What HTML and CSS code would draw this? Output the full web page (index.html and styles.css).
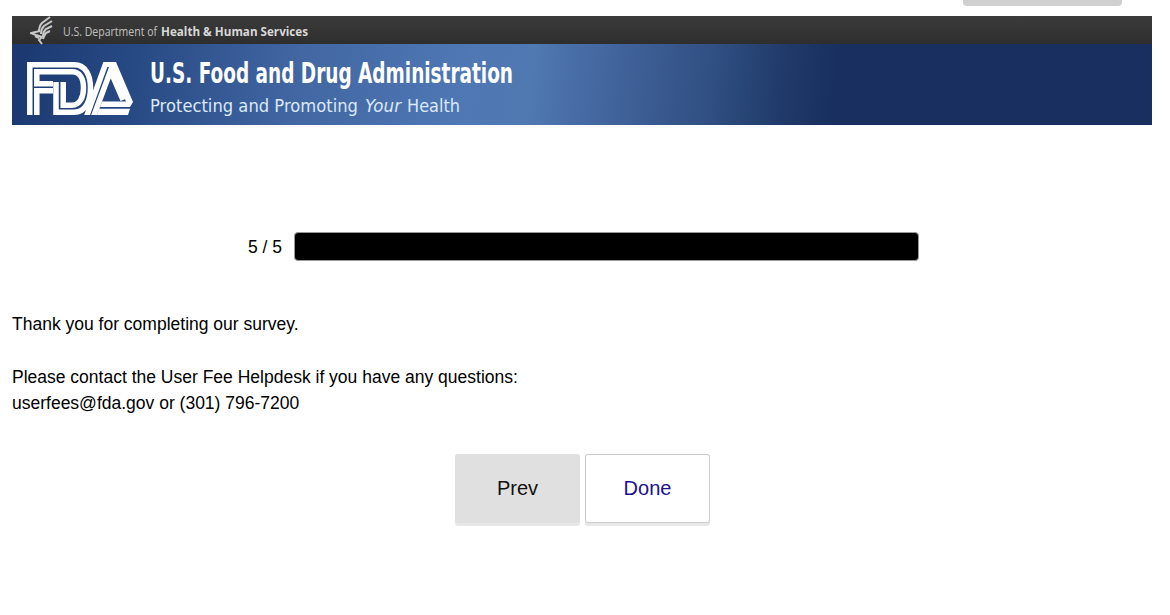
FILE: index.html
```html
<!DOCTYPE html>
<html lang="en">
<head>
    <meta charset="UTF-8">
    <meta name="viewport" content="width=device-width, initial-scale=1.0">
    <title>FDA User Fee Survey</title>
    <link rel="stylesheet" href="styles.css">
</head>
<body>

<div class="exit-tab"></div>

<div class="container">
    <div class="banner">
        <div class="hhs">
            <svg class="hhs-logo" width="23" height="29" viewBox="0 0 23 29">
                <path d="M20 1L12 7Q9 10 9 16M22 5L14 10Q11 13 11 18M22 10L16 13Q13 16 13 20M20 15L16 17Q14 20 13 23" />
                <path d="M10 15L1 17L6 19L12 21L9 24L12 28M5 20L9 22" />
            </svg>
            <svg class="hhs-name" width="260" height="28">
                <text x="0" y="20" textLength="94" lengthAdjust="spacingAndGlyphs">U.S. Department of</text>
                <text class="bold" x="98" y="20" textLength="147" lengthAdjust="spacingAndGlyphs">Health &amp; Human Services</text>
            </svg>
        </div>
        <div class="fda">
            <svg class="fda-logo" width="107" height="53" viewBox="0 0 107 53">
                <!-- F and D share the outer and the inner band -->
                <path d="M2.8 53V2.8H47C59 2.8 63.5 14 63.5 26S59 50.2 47 50.2H29V20" />
                <path d="M26 21.8H9.8V9.8H45C53 9.8 56.5 17 56.5 26S53 43.2 45 43.2H36.2V20" />
                <path d="M9.8 53V28.8H26" />
                <!-- A -->
                <path d="M80 -2L59 56" />
                <path d="M66 56L83.5 9L96 38" />
                <path class="solid" d="M77 0H89L106 40L103 45H73L75 39.5H99L84 5H77Z" />
                <path class="solid" d="M72 46.8H103L101 53H70Z" />
            </svg>
            <svg class="fda-name" width="560" height="80">
                <text class="title" x="0" y="39" textLength="363" lengthAdjust="spacingAndGlyphs">U.S. Food and Drug Administration</text>
                <text class="tagline" x="0" y="68" textLength="208" lengthAdjust="spacingAndGlyphs">Protecting and Promoting</text>
                <text class="tagline italic" x="215" y="68" textLength="36" lengthAdjust="spacingAndGlyphs">Your</text>
                <text class="tagline" x="257" y="68" textLength="53" lengthAdjust="spacingAndGlyphs">Health</text>
            </svg>
        </div>
    </div>

    <!-- Survey progress -->
    <div class="progress">
        <span>5 / 5</span>
        <div class="bar"></div>
    </div>

    <div class="message">
        <p>Thank you for completing our survey.</p>
        <p>Please contact the User Fee Helpdesk if you have any questions:<br>
        userfees@fda.gov or (301) 796-7200</p>
    </div>

    <div class="buttons">
        <div class="button-base"><button class="prev">Prev</button></div>
        <div class="button-base"><button class="done">Done</button></div>
    </div>
</div>

</body>
</html>
```
FILE: styles.css
```css
body {
    margin: 0;
    background-color: #ffffff;
    font-family: "Liberation Sans", Arial, sans-serif;
    font-size: 17.5px;
    color: #000000;
}
.exit-tab {
    width: 159px;
    height: 6px;
    margin-left: 963px;
    background-color: #d0d0d0;
    border-radius: 0 0 4px 4px;
}
.container {
    width: 1140px;
    margin: 10px 0 0 12px;
}
.banner {
    height: 109px;
}
.hhs {
    display: flex;
    height: 28px;
    padding-left: 18px;
    background: linear-gradient(#3b3b3b, #2e2e2e);
}
.hhs-logo {
    margin-right: 10px;
    fill: none;
    stroke: #c8c8c8;
    stroke-width: 2;
}
.hhs-name {
    font-family: "Open Sans", sans-serif;
    font-size: 13px;
    fill: #c0c0c0;
    overflow: visible;
}
.bold {
    font-weight: bold;
    fill: #d8d8d8;
}
.fda {
    display: flex;
    height: 81px;
    padding-left: 15px;
    background: linear-gradient(96deg, #1b3870 0, #274983 120px, #4267a3 290px, #4f78b4 460px, #5078b1 520px, #40629a 610px, #304f82 700px, #1f3969 775px, #182f5f 825px);
}
.fda-logo {
    margin: 18px 16px 0 0;
    fill: none;
    stroke: #ffffff;
    stroke-width: 5.5;
}
.solid {
    fill: #ffffff;
    stroke: none;
}
.fda-name {
    fill: #ffffff;
    overflow: visible;
}
.title {
    font-family: "DejaVu Sans Condensed", "DejaVu Sans", sans-serif;
    font-size: 28px;
    font-weight: bold;
}
.tagline {
    font-family: "DejaVu Sans", sans-serif;
    font-size: 18px;
    fill: #dce8fa;
}
.italic {
    font-style: italic;
}
.progress {
    display: flex;
    align-items: center;
    margin: 107px 0 0 236px;
}
.progress span {
    padding-top: 1px;
}
.bar {
    width: 623px;
    height: 27px;
    margin-left: 12px;
    background-color: #000000;
    border: 1px solid #999999;
    border-radius: 4px;
}
.message {
    margin-top: 50px;
    line-height: 26px;
}
.message p {
    margin: 0 0 27px;
}
.buttons {
    display: flex;
    gap: 5px;
    margin: 38px 0 0 443px;
}
.button-base {
    height: 72px;
    background-color: #e7e7e7;
    border-radius: 3px;
}
button {
    display: block;
    width: 125px;
    height: 69px;
    padding: 0;
    font-family: inherit;
    font-size: 20px;
    border-radius: 3px;
}
.prev {
    background-color: #e0e0e0;
    border: 1px solid #e0e0e0;
    color: #111111;
}
.done {
    background-color: #ffffff;
    border: 1px solid #cccccc;
    color: #22118c;
}
```
